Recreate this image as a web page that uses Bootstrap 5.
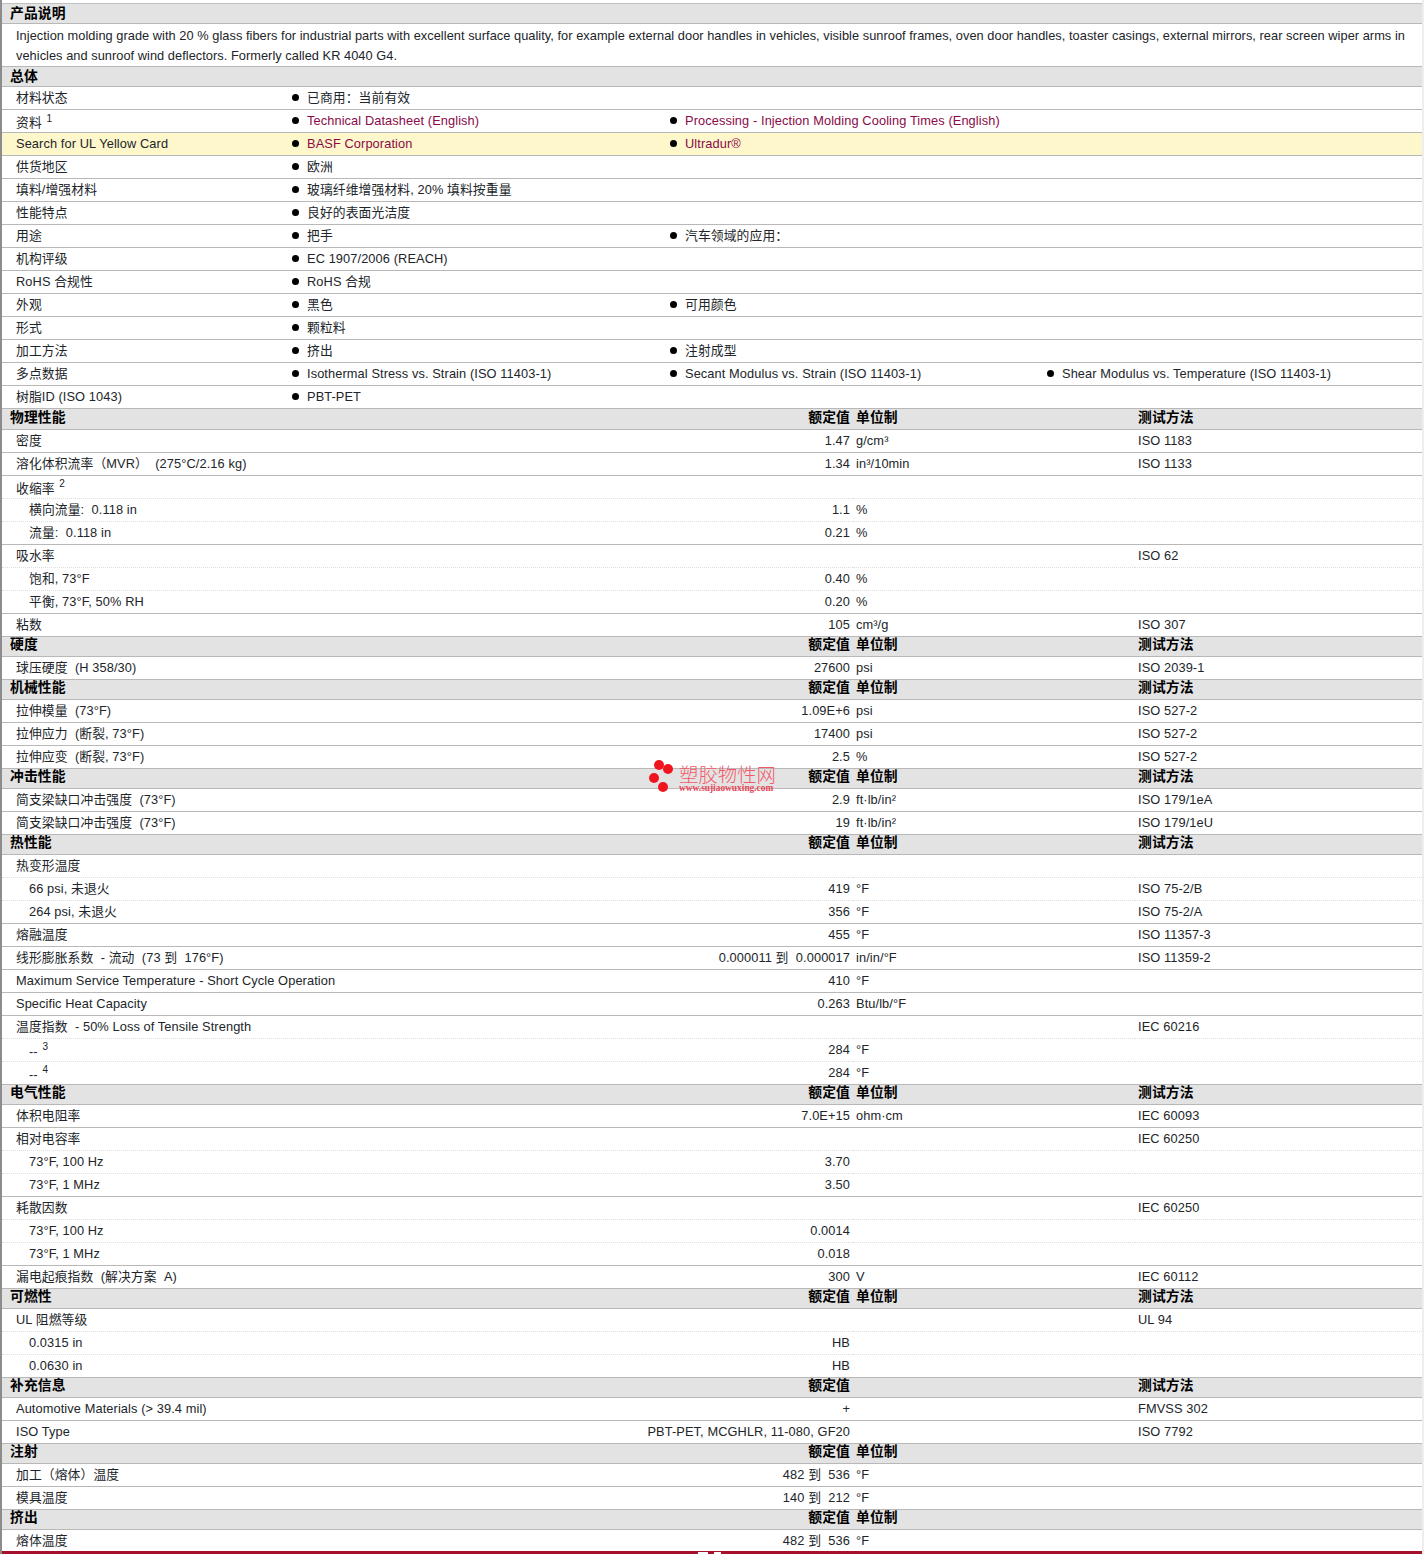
<!DOCTYPE html>
<html lang="zh">
<head>
<meta charset="utf-8">
<title>产品说明</title>
<link href="https://cdn.jsdelivr.net/npm/bootstrap@5.3.0/dist/css/bootstrap.min.css" rel="stylesheet">
<style>
html,body{margin:0;background:#fff}
.sheet{position:relative;height:1554px;overflow:hidden;padding-top:3px;border-left:2px solid #8c8c8c;border-right:2px solid #eee;font:12.8px/20px "Liberation Sans","Noto Sans CJK SC",sans-serif;letter-spacing:.1px;color:#0c0a10}
.sheet .spec-tbl{width:1420px;table-layout:fixed;margin:0;border-collapse:collapse;--bs-table-bg:transparent}
.sheet .first-tbl{border-top:1px solid #c0c0c0}
.spec-tbl.table>:not(caption)>*>*{padding:0 3px 0 14px;height:23px;border-bottom:1px solid #b8b8b8;white-space:nowrap;vertical-align:middle;box-shadow:none;color:inherit;background:transparent;font-weight:400}
.spec-tbl.table>tbody>tr.hd>*{height:20px;background:#e3e3e3;font-weight:700;font-size:13.8px;color:#000;padding-left:3px;line-height:17px}
.spec-tbl.data-tbl.table>tbody>tr.hd>*{padding-bottom:2px;line-height:16px}
.spec-tbl.table>tbody>tr.hd>*:first-child{padding-left:8px}
.spec-tbl.table>tbody>tr.desc>*{height:43px;white-space:normal;padding-right:8px;padding-top:2px;letter-spacing:.04px}
.spec-tbl.table>tbody>tr.dot>*{border-bottom:1px dotted #ddd}
.spec-tbl.table>tbody>tr.hl>*{background:#fdf7cb}
.spec-tbl.table>tbody>tr>td.sub{padding-left:27px}
.spec-tbl.table>tbody>tr>td.low{padding-top:4px;line-height:18px}
.spec-tbl.table>tbody>tr>td.bl{padding-left:6px}
.spec-tbl.table>tbody>tr>td.vl,.spec-tbl.table>tbody>tr>th.vl{text-align:right;padding-left:0;padding-right:3px}
.spec-tbl.table>tbody>tr>td.un,.spec-tbl.table>tbody>tr>td.ts{padding-left:3px}
.blt{display:inline-block;width:7px;height:7px;border-radius:50%;background:#000;margin-right:8px;vertical-align:1px}
a.lnk{color:#8a0a48;text-decoration:none}
sup{font-size:10px;top:-.55em;line-height:0;margin-left:1px}
.wmark{position:absolute;left:646px;top:758px;width:130px;height:38px;pointer-events:none}
.wmark svg{position:absolute;left:0;top:0}
.wm-a{position:absolute;left:31px;top:6px;font:300 19.4px/19px "Noto Sans CJK SC",sans-serif;letter-spacing:0;color:#f25a6a;white-space:nowrap}
.wm-b{position:absolute;left:31px;top:25px;font:700 9.4px/10px "Liberation Serif",serif;letter-spacing:0;color:#e8485a;white-space:nowrap}
.foot-bar{position:absolute;left:-2px;right:-2px;bottom:0;height:3px;background:#a80f2b}
.foot-bar i{position:absolute;top:1px;height:2px;background:#fff}
.edge{position:absolute;right:-2px;top:0;width:2px;height:113px;background:#b9c4f0}
</style>
</head>
<body>
<div class="sheet">
<table class="table spec-tbl first-tbl">
<colgroup><col style="width:284px"><col style="width:378px"><col style="width:377px"><col></colgroup>
<tbody>
<tr class="hd"><th colspan="4">产品说明</th></tr>
<tr class="desc"><td colspan="4">Injection molding grade with 20 % glass fibers for industrial parts with excellent surface quality, for example external door handles in vehicles, visible sunroof frames, oven door handles, toaster casings, external mirrors, rear screen wiper arms in vehicles and sunroof wind deflectors. Formerly called KR 4040 G4.</td></tr>
<tr class="hd"><th colspan="4">总体</th></tr>
<tr><td>材料状态</td><td class="bl"><span class="blt"></span>已商用：当前有效</td><td></td><td></td></tr>
<tr><td class="low">资料 <sup>1</sup></td><td class="bl"><span class="blt"></span><a class="lnk" href="#">Technical Datasheet (English)</a></td><td class="bl"><span class="blt"></span><a class="lnk" href="#">Processing - Injection Molding Cooling Times (English)</a></td><td></td></tr>
<tr class="hl"><td>Search for UL Yellow Card</td><td class="bl"><span class="blt"></span><a class="lnk" href="#">BASF Corporation</a></td><td class="bl"><span class="blt"></span><a class="lnk" href="#">Ultradur®</a></td><td></td></tr>
<tr><td>供货地区</td><td class="bl"><span class="blt"></span>欧洲</td><td></td><td></td></tr>
<tr><td>填料/增强材料</td><td class="bl"><span class="blt"></span>玻璃纤维增强材料, 20% 填料按重量</td><td></td><td></td></tr>
<tr><td>性能特点</td><td class="bl"><span class="blt"></span>良好的表面光洁度</td><td></td><td></td></tr>
<tr><td>用途</td><td class="bl"><span class="blt"></span>把手</td><td class="bl"><span class="blt"></span>汽车领域的应用：</td><td></td></tr>
<tr><td>机构评级</td><td class="bl"><span class="blt"></span>EC 1907/2006 (REACH)</td><td></td><td></td></tr>
<tr><td>RoHS 合规性</td><td class="bl"><span class="blt"></span>RoHS 合规</td><td></td><td></td></tr>
<tr><td>外观</td><td class="bl"><span class="blt"></span>黑色</td><td class="bl"><span class="blt"></span>可用颜色</td><td></td></tr>
<tr><td>形式</td><td class="bl"><span class="blt"></span>颗粒料</td><td></td><td></td></tr>
<tr><td>加工方法</td><td class="bl"><span class="blt"></span>挤出</td><td class="bl"><span class="blt"></span>注射成型</td><td></td></tr>
<tr><td>多点数据</td><td class="bl"><span class="blt"></span>Isothermal Stress vs. Strain (ISO 11403-1)</td><td class="bl"><span class="blt"></span>Secant Modulus vs. Strain (ISO 11403-1)</td><td class="bl"><span class="blt"></span>Shear Modulus vs. Temperature (ISO 11403-1)</td></tr>
<tr><td>树脂ID (ISO 1043)</td><td class="bl"><span class="blt"></span>PBT-PET</td><td></td><td></td></tr>
</tbody>
</table>
<table class="table spec-tbl data-tbl">
<colgroup><col style="width:640px"><col style="width:211px"><col style="width:282px"><col></colgroup>
<tbody>
<tr class="hd"><th>物理性能</th><th class="vl">额定值</th><th>单位制</th><th>测试方法</th></tr>
<tr><td>密度</td><td class="vl">1.47</td><td class="un">g/cm³</td><td class="ts">ISO 1183</td></tr>
<tr><td>溶化体积流率（MVR）&nbsp; (275°C/2.16 kg)</td><td class="vl">1.34</td><td class="un">in³/10min</td><td class="ts">ISO 1133</td></tr>
<tr class="dot"><td class="low">收缩率 <sup>2</sup></td><td class="vl"></td><td class="un"></td><td class="ts"></td></tr>
<tr class="dot"><td class="sub">横向流量:&nbsp; 0.118 in</td><td class="vl">1.1</td><td class="un">%</td><td class="ts"></td></tr>
<tr><td class="sub">流量:&nbsp; 0.118 in</td><td class="vl">0.21</td><td class="un">%</td><td class="ts"></td></tr>
<tr class="dot"><td>吸水率</td><td class="vl"></td><td class="un"></td><td class="ts">ISO 62</td></tr>
<tr class="dot"><td class="sub">饱和, 73°F</td><td class="vl">0.40</td><td class="un">%</td><td class="ts"></td></tr>
<tr><td class="sub">平衡, 73°F, 50% RH</td><td class="vl">0.20</td><td class="un">%</td><td class="ts"></td></tr>
<tr><td>粘数</td><td class="vl">105</td><td class="un">cm³/g</td><td class="ts">ISO 307</td></tr>
<tr class="hd"><th>硬度</th><th class="vl">额定值</th><th>单位制</th><th>测试方法</th></tr>
<tr><td>球压硬度&nbsp; (H 358/30)</td><td class="vl">27600</td><td class="un">psi</td><td class="ts">ISO 2039-1</td></tr>
<tr class="hd"><th>机械性能</th><th class="vl">额定值</th><th>单位制</th><th>测试方法</th></tr>
<tr><td>拉伸模量&nbsp; (73°F)</td><td class="vl">1.09E+6</td><td class="un">psi</td><td class="ts">ISO 527-2</td></tr>
<tr><td>拉伸应力&nbsp; (断裂, 73°F)</td><td class="vl">17400</td><td class="un">psi</td><td class="ts">ISO 527-2</td></tr>
<tr><td>拉伸应变&nbsp; (断裂, 73°F)</td><td class="vl">2.5</td><td class="un">%</td><td class="ts">ISO 527-2</td></tr>
<tr class="hd"><th>冲击性能</th><th class="vl">额定值</th><th>单位制</th><th>测试方法</th></tr>
<tr><td>简支梁缺口冲击强度&nbsp; (73°F)</td><td class="vl">2.9</td><td class="un">ft·lb/in²</td><td class="ts">ISO 179/1eA</td></tr>
<tr><td>简支梁缺口冲击强度&nbsp; (73°F)</td><td class="vl">19</td><td class="un">ft·lb/in²</td><td class="ts">ISO 179/1eU</td></tr>
<tr class="hd"><th>热性能</th><th class="vl">额定值</th><th>单位制</th><th>测试方法</th></tr>
<tr class="dot"><td>热变形温度</td><td class="vl"></td><td class="un"></td><td class="ts"></td></tr>
<tr class="dot"><td class="sub">66 psi, 未退火</td><td class="vl">419</td><td class="un">°F</td><td class="ts">ISO 75-2/B</td></tr>
<tr><td class="sub">264 psi, 未退火</td><td class="vl">356</td><td class="un">°F</td><td class="ts">ISO 75-2/A</td></tr>
<tr><td>熔融温度</td><td class="vl">455</td><td class="un">°F</td><td class="ts">ISO 11357-3</td></tr>
<tr><td>线形膨胀系数&nbsp; - 流动&nbsp; (73 到&nbsp; 176°F)</td><td class="vl">0.000011 到&nbsp; 0.000017</td><td class="un">in/in/°F</td><td class="ts">ISO 11359-2</td></tr>
<tr><td>Maximum Service Temperature - Short Cycle Operation</td><td class="vl">410</td><td class="un">°F</td><td class="ts"></td></tr>
<tr><td>Specific Heat Capacity</td><td class="vl">0.263</td><td class="un">Btu/lb/°F</td><td class="ts"></td></tr>
<tr class="dot"><td>温度指数&nbsp; - 50% Loss of Tensile Strength</td><td class="vl"></td><td class="un"></td><td class="ts">IEC 60216</td></tr>
<tr class="dot"><td class="sub low">-- <sup>3</sup></td><td class="vl">284</td><td class="un">°F</td><td class="ts"></td></tr>
<tr><td class="sub low">-- <sup>4</sup></td><td class="vl">284</td><td class="un">°F</td><td class="ts"></td></tr>
<tr class="hd"><th>电气性能</th><th class="vl">额定值</th><th>单位制</th><th>测试方法</th></tr>
<tr><td>体积电阻率</td><td class="vl">7.0E+15</td><td class="un">ohm·cm</td><td class="ts">IEC 60093</td></tr>
<tr class="dot"><td>相对电容率</td><td class="vl"></td><td class="un"></td><td class="ts">IEC 60250</td></tr>
<tr class="dot"><td class="sub">73°F, 100 Hz</td><td class="vl">3.70</td><td class="un"></td><td class="ts"></td></tr>
<tr><td class="sub">73°F, 1 MHz</td><td class="vl">3.50</td><td class="un"></td><td class="ts"></td></tr>
<tr class="dot"><td>耗散因数</td><td class="vl"></td><td class="un"></td><td class="ts">IEC 60250</td></tr>
<tr class="dot"><td class="sub">73°F, 100 Hz</td><td class="vl">0.0014</td><td class="un"></td><td class="ts"></td></tr>
<tr><td class="sub">73°F, 1 MHz</td><td class="vl">0.018</td><td class="un"></td><td class="ts"></td></tr>
<tr><td>漏电起痕指数&nbsp; (解决方案&nbsp; A)</td><td class="vl">300</td><td class="un">V</td><td class="ts">IEC 60112</td></tr>
<tr class="hd"><th>可燃性</th><th class="vl">额定值</th><th>单位制</th><th>测试方法</th></tr>
<tr class="dot"><td>UL 阻燃等级</td><td class="vl"></td><td class="un"></td><td class="ts">UL 94</td></tr>
<tr class="dot"><td class="sub">0.0315 in</td><td class="vl">HB</td><td class="un"></td><td class="ts"></td></tr>
<tr><td class="sub">0.0630 in</td><td class="vl">HB</td><td class="un"></td><td class="ts"></td></tr>
<tr class="hd"><th>补充信息</th><th class="vl">额定值</th><th></th><th>测试方法</th></tr>
<tr><td>Automotive Materials (&gt; 39.4 mil)</td><td class="vl">+</td><td class="un"></td><td class="ts">FMVSS 302</td></tr>
<tr><td>ISO Type</td><td class="vl">PBT-PET, MCGHLR, 11-080, GF20</td><td class="un"></td><td class="ts">ISO 7792</td></tr>
<tr class="hd"><th>注射</th><th class="vl">额定值</th><th>单位制</th><th></th></tr>
<tr><td>加工（熔体）温度</td><td class="vl">482 到&nbsp; 536</td><td class="un">°F</td><td class="ts"></td></tr>
<tr><td>模具温度</td><td class="vl">140 到&nbsp; 212</td><td class="un">°F</td><td class="ts"></td></tr>
<tr class="hd"><th>挤出</th><th class="vl">额定值</th><th>单位制</th><th></th></tr>
<tr><td>熔体温度</td><td class="vl">482 到&nbsp; 536</td><td class="un">°F</td><td class="ts"></td></tr>
</tbody>
</table>
<div class="wmark">
<svg width="28" height="38" viewBox="0 0 28 38" aria-hidden="true"><g fill="#f0141e"><circle cx="11" cy="7" r="5"/><circle cx="20" cy="11" r="5"/><circle cx="6" cy="20" r="5"/><circle cx="15" cy="29" r="5"/></g></svg>
<span class="wm-a">塑胶物性网</span>
<span class="wm-b">www.sujiaowuxing.com</span>
</div>
<div class="edge"></div>
<div class="foot-bar"><i style="left:698px;width:10px"></i><i style="left:714px;width:7px"></i></div>
</div>
<script src="https://cdn.jsdelivr.net/npm/bootstrap@5.3.0/dist/js/bootstrap.bundle.min.js"></script>
</body>
</html>
